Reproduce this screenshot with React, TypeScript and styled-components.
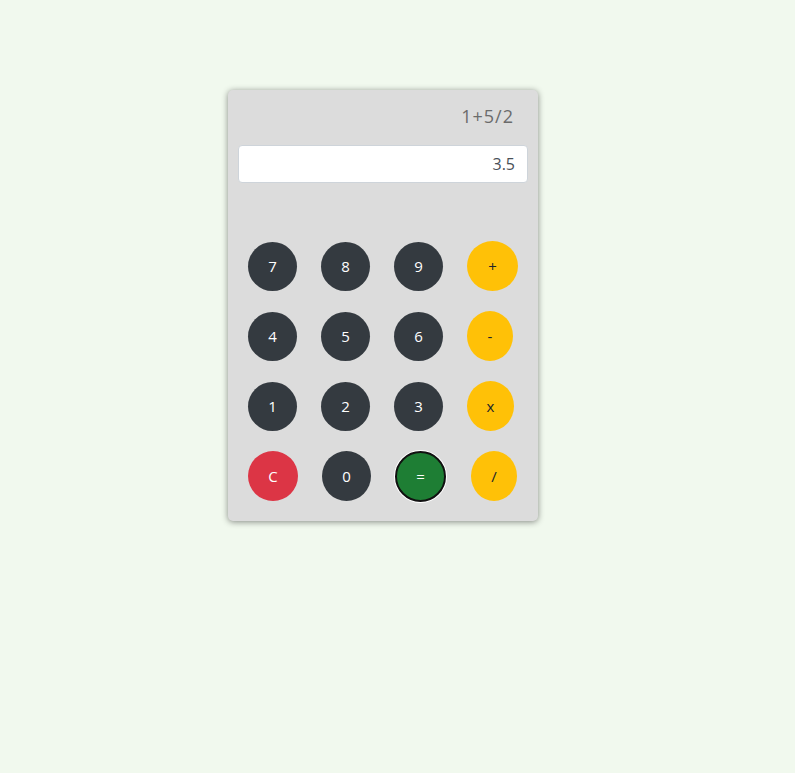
import React from "react";
import styled, { createGlobalStyle } from "styled-components";

const Global = createGlobalStyle`
  html, body { margin: 0; padding: 0; background: #f1f9ee; }
  body { font-family: "Open Sans", "Noto Sans", sans-serif; }
  * { box-sizing: border-box; }
`;

const Page = styled.div`
  min-height: 773px;
  padding: 90px 0 0 228px;
`;

const Card = styled.div`
  width: 310px;
  background: #dcdcdc;
  border-radius: 5px;
  box-shadow: 0 1px 6px rgba(0, 0, 0, 0.45);
  padding: 13px 10px 20px;
  display: flex;
  flex-direction: column;
`;

const Expression = styled.div`
  height: 27px;
  line-height: 27px;
  font-size: 18px;
  letter-spacing: 1px;
  color: #6b6b6b;
  text-align: right;
  padding-right: 14px;
`;

const Result = styled.input`
  margin-top: 15px;
  height: 38px;
  width: 100%;
  border: 1px solid #ced4da;
  border-radius: 4px;
  background: #fff;
  padding: 6px 12px;
  text-align: right;
  font-family: inherit;
  font-size: 16px;
  color: #495057;
  outline: none;
`;

const Keys = styled.div`
  margin-top: 58px;
  padding-left: 10px;
  display: grid;
  grid-template-columns: repeat(4, 73px);
  grid-auto-rows: 50px;
  row-gap: 20px;
`;

type Kind = "dark" | "warn" | "danger" | "success";

const colors: Record<Kind, { bg: string; fg: string }> = {
  dark: { bg: "#343a40", fg: "#ffffff" },
  warn: { bg: "#ffc107", fg: "#212529" },
  danger: { bg: "#dc3545", fg: "#ffffff" },
  success: { bg: "#1e7e34", fg: "#ffffff" },
};

const Key = styled.button<{ $kind: Kind; $w: number; $h: number; $dx: number; $ring?: boolean }>`
  width: ${(p) => p.$w}px;
  height: ${(p) => p.$h}px;
  margin-left: ${(p) => p.$dx}px;
  align-self: center;
  border-radius: 50%;
  border: ${(p) => (p.$ring ? "2px solid #111" : "none")};
  box-shadow: ${(p) => (p.$ring ? "0 0 0 1px #ffffff" : "none")};
  background: ${(p) => colors[p.$kind].bg};
  color: ${(p) => colors[p.$kind].fg};
  font-family: inherit;
  font-size: 15px;
  padding: 0;
  display: flex;
  align-items: center;
  justify-content: center;
  cursor: pointer;
`;

type K = { label: string; kind: Kind; w: number; h: number; dx: number; ring?: boolean };

const keys: K[] = [
  { label: "7", kind: "dark", w: 49, h: 49, dx: 0 },
  { label: "8", kind: "dark", w: 49, h: 49, dx: 0 },
  { label: "9", kind: "dark", w: 49, h: 49, dx: 0 },
  { label: "+", kind: "warn", w: 51, h: 50, dx: 0 },
  { label: "4", kind: "dark", w: 49, h: 49, dx: 0 },
  { label: "5", kind: "dark", w: 49, h: 49, dx: 0 },
  { label: "6", kind: "dark", w: 49, h: 49, dx: 0 },
  { label: "-", kind: "warn", w: 46, h: 50, dx: 0 },
  { label: "1", kind: "dark", w: 49, h: 49, dx: 0 },
  { label: "2", kind: "dark", w: 49, h: 49, dx: 0 },
  { label: "3", kind: "dark", w: 49, h: 49, dx: 0 },
  { label: "x", kind: "warn", w: 47, h: 50, dx: 0 },
  { label: "C", kind: "danger", w: 50, h: 50, dx: 0 },
  { label: "0", kind: "dark", w: 49, h: 50, dx: 1 },
  { label: "=", kind: "success", w: 51, h: 51, dx: 1, ring: true },
  { label: "/", kind: "warn", w: 46, h: 50, dx: 4 },
];

export default function App() {
  return (
    <>
      <Global />
      <Page>
        <Card>
          <Expression>1+5/2</Expression>
          <Result readOnly value="3.5" />
          <Keys>
            {keys.map((k) => (
              <Key key={k.label} $kind={k.kind} $w={k.w} $h={k.h} $dx={k.dx} $ring={k.ring}>
                {k.label}
              </Key>
            ))}
          </Keys>
        </Card>
      </Page>
    </>
  );
}
